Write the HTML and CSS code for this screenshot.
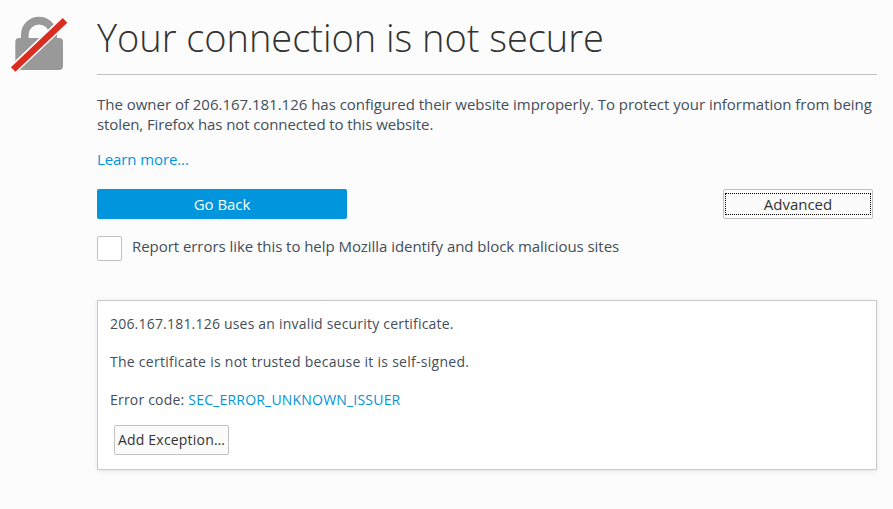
FILE: index.html
```html
<!DOCTYPE html>
<html lang="en">
<head>
<meta charset="utf-8">
<title>Insecure Connection</title>
<link rel="stylesheet" href="styles.css">
</head>
<body>
<main class="page">
  <svg class="lock" width="60" height="60" viewBox="0 0 60 60" aria-hidden="true">
    <path d="M16.800 28V20.800a14.200 14.200 0 0 1 28.400 0V28" fill="none" stroke="#999" stroke-width="7.600"/>
    <rect x="7.300" y="24" width="47.700" height="32" rx="4" fill="#999"/>
    <path d="M3.500 57 58.500 4.800" stroke="#fcfcfc" stroke-width="9.600"/>
    <path d="M5.200 55.500 57 6.300" stroke="#d92d21" stroke-width="6.500"/>
  </svg>
  <div class="content">
    <h1 class="title">Your connection is not secure</h1>
    <p class="intro">The owner of 206.167.181.126 has configured their website improperly. To protect your information from being <span class="tight">stolen, Firefox has not connected to this website.</span></p>
    <p class="more"><a href="#">Learn more...</a></p>
    <div class="actions">
      <button class="btn primary">Go Back</button>
      <button class="btn advanced"><span>Advanced</span></button>
    </div>
    <label class="report"><input class="check" type="checkbox"><span>Report errors like this to help Mozilla identify and block malicious sites</span></label>
    <section class="details">
      <p>206.167.181.126 uses an invalid security certificate.</p>
      <p class="reason">The certificate is not trusted because it is self-signed.</p>
      <p>Error code: <a href="#">SEC_ERROR_UNKNOWN_ISSUER</a></p>
      <button class="btn exception">Add Exception…</button>
    </section>
  </div>
</main>
</body>
</html>
```
FILE: styles.css
```css
* { box-sizing: border-box; }
body { margin: 0; background: #fcfcfc; color: #424e5a; font: 15px/20px "Open Sans", sans-serif; }
p { margin: 0; }
a { color: #0095dd; text-decoration: none; }
.page { display: flex; height: 509px; padding: 0 16px 0 8px; }
.lock { flex: none; margin-top: 14px; }
.content { flex: 1; margin-left: 29px; }
.title { margin: 0; height: 75px; padding-top: 13px; border-bottom: 1px solid #c1c1c1; color: #333; font-size: 38px; font-weight: 300; line-height: 48px; letter-spacing: -0.03px; white-space: nowrap; }
.intro { margin-top: 19px; letter-spacing: -0.018px; }
.tight { letter-spacing: -0.1px; }
.more { margin-top: 15px; letter-spacing: -0.1px; }
.actions { display: flex; justify-content: space-between; margin: 20px 4px 0 0; }
.btn { font: inherit; color: #333; background: #fbfbfb; border: 1px solid #c1c1c1; border-radius: 2px; height: 30px; padding: 0; }
.btn.primary { width: 250px; background: #0095dd; border: 0; color: #fff; letter-spacing: -0.05px; }
.btn.advanced { width: 150px; padding: 1px; }
.advanced span { display: block; height: 22px; border: 1px dotted #000; line-height: 20px; }
.report { display: flex; gap: 10px; margin-top: 17px; height: 25px; letter-spacing: -0.05px; }
.check { appearance: none; margin: 0; width: 25px; height: 25px; border: 1px solid #c1c1c1; border-radius: 2px; background: #fff; }
.details { margin-top: 39px; height: 170px; padding: 13px 12px; background: #fff; border: 1px solid #c9c9c9; box-shadow: 0 1px 4px rgba(0, 0, 0, 0.1); font-size: 14px; line-height: 19px; letter-spacing: 0.2px; }
.details p { margin-bottom: 19px; }
.details .reason { letter-spacing: 0.27px; }
.btn.exception { display: block; margin: -3px 0 0 4px; padding-bottom: 2px; width: 115px; letter-spacing: 0.2px; }
```
